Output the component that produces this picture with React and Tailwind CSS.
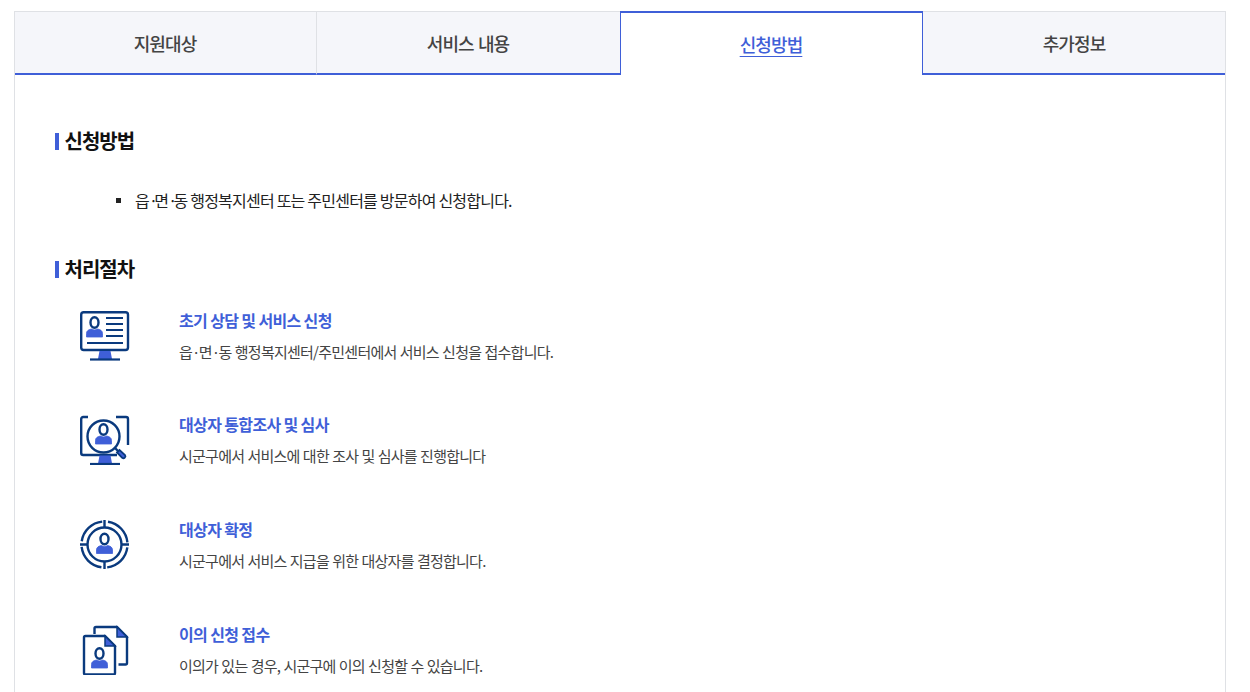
const NAVY = "#0a3a7e";
const BLUE = "#3f5fd8";

function Person({ cx, top }) {
  return (
    <g transform={`translate(${cx} ${top})`}>
      <ellipse cx="0" cy="5.500" rx="4" ry="5.200" fill="none" stroke={NAVY} strokeWidth="2.400" />
      <path d="M-8 20v-3.500c0-3 2.500-4 5-4.500 1.500 1.200 4.500 1.200 6 0 2.500.5 5 1.500 5 4.500V20z" fill={BLUE} stroke={BLUE} strokeWidth="0.800" />
    </g>
  );
}

function Stand({ y }) {
  return (
    <>
      <path d={`M19.500 ${y}h11l1.500 8h-14z`} fill={BLUE} stroke="none" />
      <path d={`M10 ${y + 8.500}h30`} strokeWidth="2.200" />
    </>
  );
}

function IconApply() {
  return (
    <svg width="50" height="50" viewBox="0 0 50 50" fill="none" stroke={NAVY} strokeWidth="2.400">
      <rect x="1.200" y="1.200" width="46.800" height="37.800" rx="2.500" />
      <path d="M26 7h17M26 13h17M26 19h17M26 25h17M7 32h36" strokeWidth="2" />
      <Person cx={14.5} top={6} />
      <Stand y={40} />
    </svg>
  );
}

function IconSearch() {
  return (
    <svg width="50" height="50" viewBox="0 0 50 50" fill="none" stroke={NAVY} strokeWidth="2.400">
      <path d="M8 2H3.200a2 2 0 0 0-2 2v34a2 2 0 0 0 2 2H37M36 2h10a2 2 0 0 1 2 2v26" />
      <circle cx="23.500" cy="21.500" r="16" fill="#fff" />
      <Person cx={23.5} top={9} />
      <path d="M35 33l3 3" />
      <path d="M37 37.500l2.500-2.500 5.500 5a2 2 0 0 1-2.800 2.800z" fill={BLUE} strokeWidth="1.800" />
      <Stand y={40.5} />
    </svg>
  );
}

function IconTarget() {
  return (
    <svg width="50" height="50" viewBox="0 0 50 50" fill="none" stroke={NAVY} strokeWidth="2.400">
      <circle cx="24.500" cy="24.500" r="17" />
      <circle cx="24.500" cy="24.500" r="23" strokeDasharray="30.100 6" strokeDashoffset="-3" />
      <path d="M24.500 0v8M24.500 41v8M0 24.500h7.500M41.500 24.500h7.500" />
      <Person cx={24.5} top={13.5} />
    </svg>
  );
}

function IconDocs() {
  return (
    <svg width="50" height="50" viewBox="0 0 50 50" fill="none" stroke={NAVY} strokeWidth="2.400">
      <path d="M14.500 9V3.500a1.500 1.500 0 0 1 1.500-1.500H37l10 10v26a1.500 1.500 0 0 1-1.500 1.500H38.500" />
      <path d="M37 2v10h10z" fill={BLUE} strokeWidth="1.500" />
      <path d="M4 12.500A1.500 1.500 0 0 1 5.500 11H25l10 10v27a1.500 1.500 0 0 1-1.500 1.500h-28A1.500 1.500 0 0 1 4 48z" />
      <path d="M25 11v10h10z" fill={BLUE} strokeWidth="1.500" />
      <Person cx={19.5} top={23} />
    </svg>
  );
}

const steps = [
  {
    Icon: IconApply,
    title: "초기 상담 및 서비스 신청",
    desc: (
      <>
        읍<span className="tracking-[-1.700px]">·</span>면<span className="tracking-[-1.700px]">·</span>동 행정복지센터/주민센터에서 서비스 신청을 접수합니다.
      </>
    ),
  },
  { Icon: IconSearch, title: "대상자 통합조사 및 심사", desc: "시군구에서 서비스에 대한 조사 및 심사를 진행합니다" },
  { Icon: IconTarget, title: "대상자 확정", desc: "시군구에서 서비스 지급을 위한 대상자를 결정합니다." },
  { Icon: IconDocs, title: "이의 신청 접수", desc: "이의가 있는 경우, 시군구에 이의 신청할 수 있습니다." },
];

function Tab({ label, active, className = "" }) {
  if (active) {
    return (
      <div className={`flex h-[64px] items-center justify-center border-x border-t-2 border-[#3f5fd8] bg-white pr-[1px] text-[18px] font-medium tracking-[-0.05em] text-[#3f5fd8] underline underline-offset-[4px] -mt-px ${className}`}>
        {label}
      </div>
    );
  }
  return (
    <div className={`flex h-[63px] items-center justify-center border-b-2 border-[#3f5fd8] bg-[#f5f6fa] pt-[2px] pr-[1px] text-[18px] font-medium tracking-[-0.05em] [word-spacing:1px] text-[#444] ${className}`}>
      {label}
    </div>
  );
}

function Heading({ children }) {
  return (
    <h3 className="flex h-[30px] items-center text-[20px] font-bold leading-[30px] tracking-[-0.05em] text-[#111]">
      <span className="mr-[5.500px] h-[17px] w-[4px] bg-[#3f5fd8]" />
      {children}
    </h3>
  );
}

export default function App() {
  return (
    <div className="h-[692px] overflow-hidden bg-white pt-[11px] pl-[14px] pr-[24px]" style={{ fontFamily: '"Noto Sans CJK KR", "Noto Sans", sans-serif' }}>
      <div className="h-[800px] w-[1212px] border-x border-t border-[#dfe1e5]">
        <div className="flex items-start">
          <Tab label="지원대상" className="w-[302px] border-r border-r-[#dfe1e5]" />
          <Tab label="서비스 내용" className="w-[303px]" />
          <Tab label="신청방법" active className="w-[303px]" />
          <Tab label="추가정보" className="w-[302px] !pr-0" />
        </div>
        <div className="pl-[40px] pt-[51px]">
          <Heading>신청방법</Heading>
          <ul className="mt-[30px] pl-[61px]">
            <li className="flex h-[28px] items-center text-[16px] tracking-[-0.780px] text-[#222]">
              <span className="mr-[14px] h-[5px] w-[5px] shrink-0 bg-[#222]" />
              <span>
                읍<span className="tracking-[-3.700px]">·</span>면<span className="tracking-[-3.700px]">·</span>동 행정복지센터 또는 주민센터를 방문하여 신청합니다.
              </span>
            </li>
          </ul>
          <div className="mt-[40px]">
            <Heading>처리절차</Heading>
          </div>
          <div className="mt-[23.800px] flex flex-col pl-[25px]">
            {steps.map(({ Icon, title, desc }) => (
              <div key={title} className="flex h-[104.670px] items-start">
                <div className="mt-[3px] mr-[49px] h-[50px] w-[50px] shrink-0">
                  <Icon />
                </div>
                <div>
                  <div className="text-[16px] font-bold leading-[24px] tracking-[-0.04em] text-[#3f5fd8]">{title}</div>
                  <div className="mt-[8px] text-[15px] leading-[24px] tracking-[-0.05em] [word-spacing:0.600px] text-[#444]">{desc}</div>
                </div>
              </div>
            ))}
          </div>
        </div>
      </div>
    </div>
  );
}
